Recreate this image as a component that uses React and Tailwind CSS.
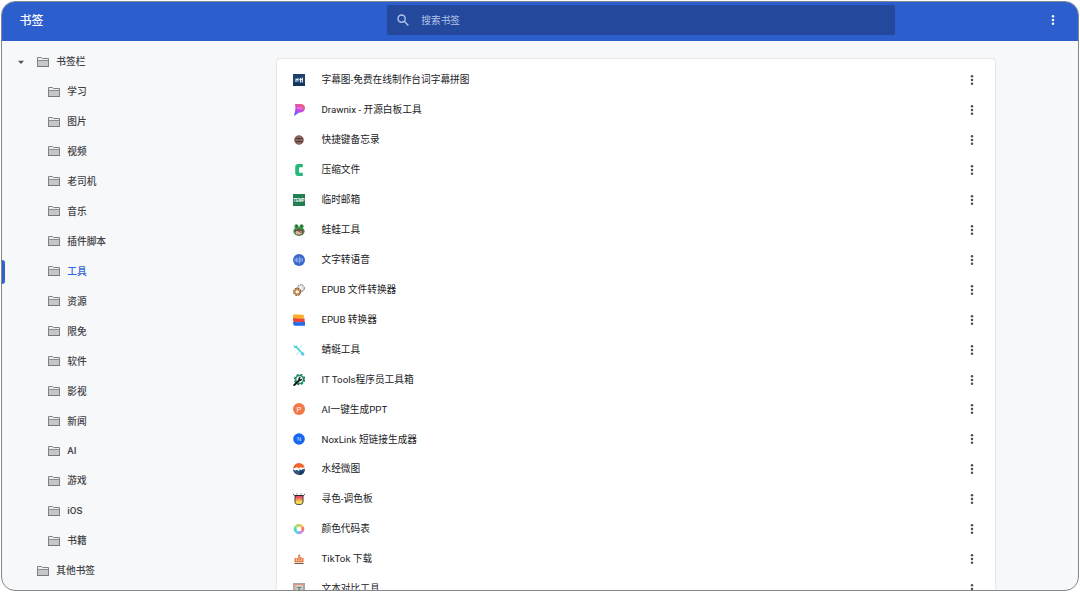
import React from "react";

const folders = ["学习", "图片", "视频", "老司机", "音乐", "插件脚本", "工具", "资源", "限免", "软件", "影视", "新闻", "AI", "游戏", "iOS", "书籍"];

const letter = { fontFamily: '"Liberation Sans", sans-serif', fontWeight: 700, textAnchor: "middle" };

const icons = {
  subtitle: (
    <>
      <rect width="12" height="12" fill="#1d426f" />
      <path d="M0 9h12v3H0z" fill="#15345c" />
      <path d="M3 4.500v3.500M2.500 5.500h2.500M5 4v3.500M7.500 4v4.500M6.300 5.500h3.700M9.300 3.500v5" stroke="#e3ebf3" strokeWidth="1.100" fill="none" />
    </>
  ),
  drawnix: (
    <>
      <defs>
        <linearGradient id="dx" x1=".7" y1="0" x2=".2" y2="1">
          <stop offset="0" stopColor="#fb5a73" />
          <stop offset=".5" stopColor="#c64be8" />
          <stop offset="1" stopColor="#5260ff" />
        </linearGradient>
      </defs>
      <path d="M2 0H7.800C10.400 0 12 1.700 12 4c0 2.700-1.900 4.400-4.700 4.600C5.300 8.800 4.600 9.800 1 12c.3-2.500 1.200-4.400 1.400-7.500C2.500 2.800 2.300 1.700 2 0z" fill="url(#dx)" />
      <path d="M4 4.200c.8-.7 1.400-.7 2 0s1.200.6 1.700 0 1.200-.3 1.800.4" stroke="#ffc3e8" strokeWidth=".8" fill="none" />
    </>
  ),
  keys: (
    <>
      <circle cx="6" cy="6" r="4.500" fill="#80504d" stroke="#a8655e" strokeWidth=".6" />
      <path d="M2.500 4.500h7M2.500 7.600h7" stroke="#3c3c40" strokeWidth=".9" />
      <path d="M3.200 6h5.600M4.200 3.300h3.600M4.500 8.900h3" stroke="#c9aaa3" strokeWidth=".7" />
      <path d="M6 3v6" stroke="#4a3c3c" strokeWidth=".7" />
    </>
  ),
  zip: <path d="M9.800 0v3.200H7.100c-.7 0-1.100.4-1.100 1.100v3.400c0 .7.400 1.100 1.100 1.100h2.700V12H5.300C3.300 12 2.200 10.900 2.200 9V3C2.200 1.100 3.300 0 5.300 0z" fill="#27b77b" />,
  temp: (
    <>
      <rect width="12" height="12" fill="#257e53" />
      <text x="6" y="7.900" fontSize="5" textLength="10.800" lengthAdjust="spacingAndGlyphs" fill="#fff" style={letter}>TEMP</text>
    </>
  ),
  frog: (
    <>
      <ellipse cx="6" cy="7.300" rx="5.600" ry="4.600" fill="#3b9149" />
      <circle cx="3.400" cy="2.300" r="2" fill="#3b9149" />
      <circle cx="8.600" cy="2.300" r="2" fill="#3b9149" />
      <circle cx="3.400" cy="2.300" r=".7" fill="#173d27" />
      <circle cx="8.600" cy="2.300" r=".7" fill="#173d27" />
      <path d="M1.600 6.400 6 5l4.500 1.500-1 3.500c-2 1.700-5 1.700-6.600 0z" fill="#713f36" />
      <ellipse cx="5.800" cy="8.600" rx="3.300" ry="2.200" fill="#dfb4a3" />
      <path d="M4.500 6.500 8.500 8.700" stroke="#3e2926" strokeWidth=".8" />
    </>
  ),
  speech: (
    <>
      <circle cx="6" cy="6" r="6" fill="#3867c8" />
      <path d="M2 5v2M3.400 4v3.800M4.900 4.800v3M6.400 3v6M7.900 4v3.800M9.400 4.800v2.400" stroke="#adcaff" strokeWidth=".75" strokeLinecap="round" />
    </>
  ),
  gears: (
    <>
      <circle cx="7.800" cy="4.200" r="3.600" fill="#f7f5f2" stroke="#77716d" strokeWidth="1" strokeDasharray="1.700 .9" />
      <circle cx="7.800" cy="4.200" r="2.700" fill="none" stroke="#aaa5a1" strokeWidth=".6" />
      <circle cx="4.200" cy="7.800" r="3.500" fill="none" stroke="#72462a" strokeWidth="1.300" strokeDasharray="1.800 .95" />
      <circle cx="4.200" cy="7.800" r="2.500" fill="#fff" stroke="#c88a4c" strokeWidth="1.700" />
    </>
  ),
  epub: (
    <>
      <path d="M1.500.3 11 1l-.5 3.300 1 .5v3H1.200L0 6V1.500z" fill="#f8ae28" />
      <path d="M.2 4.100c3 .6 6 1.100 11.300.5v3.600H1.500C.3 7.700-.1 5.500.2 4.100z" fill="#eb4240" />
      <path d="M.2 7.800c3.500.7 7.300.5 11.800 0v4H1.500C.2 11.400-.1 9.200.2 7.800z" fill="#246de4" />
    </>
  ),
  dragonfly: (
    <>
      <path d="m2.500 2.200 6.800 7.300" stroke="#42d0d6" strokeWidth="1.700" />
      <path d="m5.500 5.300 3.300-3.800M6.300 7.300 2.800 11" stroke="#a5e6e8" strokeWidth="1" />
      <path d="m1.200 1.100.3 2.300 1.900.1.300-1.800" stroke="#32d7c6" strokeWidth="1" fill="none" />
      <path d="m8 7.800 2.800.7.700 2.300-1.300 1-2.400-.9z" fill="#60caef" />
    </>
  ),
  ittools: (
    <>
      <circle cx="6.600" cy="5.500" r="4.900" fill="none" stroke="#168259" strokeWidth="1.600" strokeDasharray="2.300 1.548" />
      <circle cx="6.600" cy="5.500" r="3.900" fill="#fff" stroke="#168259" strokeWidth="1.400" />
      <path d="M1.300 11 6 6.600" stroke="#111d1a" strokeWidth="2" strokeLinecap="round" />
      <path d="M9.200 4.300 8 5.400 6.900 4.300 8 3.200C6.300 2.700 4.900 4.200 5.300 5.700L6.500 7c1.700.4 3.100-1.100 2.700-2.700z" fill="#111d1a" />
    </>
  ),
  ppt: (
    <>
      <circle cx="6" cy="6" r="6" fill="#f27749" />
      <text x="6" y="8.700" fontSize="7.500" fill="#fff" style={{ ...letter, fontWeight: 400 }}>P</text>
    </>
  ),
  nox: (
    <>
      <circle cx="6" cy="6" r="5.800" fill="#1766ee" />
      <text x="6" y="8" fontSize="5.700" fill="#dceaff" style={{ ...letter, fontWeight: 400 }}>N</text>
    </>
  ),
  water: (
    <>
      <circle cx="6" cy="6" r="6" fill="#f2652d" />
      <path d="M0 5.500 2.600 7l3-.4 2 .3L12 4.900C12.600 13.600.2 14 0 5.500z" fill="#24598c" />
      <path d="M.1 5.200 2.400 5 4 4l1.800 1.500 1.700-1.400 1.500.8 2.800-.8.1 1.600-2.200.3-1.200 1-1.500-.7L5.700 8 4 6.800 2.400 7.500.2 6.600z" fill="#fff" />
      <path d="m7 8.700 2.100-1.200 2.200 1.200C10 11.500 8.100 12 6 12z" fill="#173a61" />
    </>
  ),
  palette: (
    <>
      <defs>
        <linearGradient id="cup" x1="0" y1="0" x2="0" y2="1">
          <stop offset=".15" stopColor="#e84a6b" />
          <stop offset=".5" stopColor="#f7a04d" />
          <stop offset=".8" stopColor="#ffe94f" />
        </linearGradient>
      </defs>
      <path d="M2 2.500h8v6.200c0 1.700-1.100 2.700-2.700 2.700H4.700C3.100 11.400 2 10.400 2 8.700z" fill="url(#cup)" stroke="#22262b" strokeWidth=".9" />
      <path d="M.3.800C.5 2.200 1.200 2.500 2 2.500h8c.8 0 1.500-.3 1.700-1.700M3.500.9h1M7.500.9h1" fill="none" stroke="#22262b" strokeWidth=".8" />
    </>
  ),
  wheel: (
    <g fill="none" strokeWidth="2.900">
      <path d="M6 2.200A3.800 3.800 0 0 1 9.300 4.100" stroke="#f6c157" />
      <path d="M9.300 4.100A3.800 3.800 0 0 1 9.300 7.900" stroke="#f47a67" />
      <path d="M9.300 7.900A3.800 3.800 0 0 1 6 9.800" stroke="#c889ef" />
      <path d="M6 9.800A3.800 3.800 0 0 1 2.700 7.900" stroke="#5bc8ef" />
      <path d="M2.700 7.900A3.800 3.800 0 0 1 2.700 4.100" stroke="#5bd5a9" />
      <path d="M2.700 4.100A3.800 3.800 0 0 1 6 2.200" stroke="#a8df66" />
    </g>
  ),
  tiktok: (
    <>
      <path d="M2.200 5v3.500h7.600V5M4.300 7.500V5M6 7.500V2.200M7.800 7.500V4" fill="none" stroke="#ed7a3d" strokeWidth="1.500" />
      <path d="m6.300 1 1.400 2.200H4.900z" fill="#ed7a3d" />
      <path d="M1.500 10.500h9" stroke="#6e5750" strokeWidth="1.100" />
    </>
  ),
  compare: (
    <>
      <rect width="12" height="12" fill="#9fa9ab" />
      <path d="M.7.700h10.600V3H.7z" fill="#d49593" />
      <path d="M.7 2h2v10h-2z" fill="#dda4a0" />
      <path d="M2.500 2h7.500v10H2.500z" fill="#d7cbaa" />
      <text x="6" y="8.700" fontSize="8" fill="#4379bd" style={letter}>T</text>
    </>
  ),
};

const bookmarks = [
  ["subtitle", "字幕图-免费在线制作台词字幕拼图"],
  ["drawnix", "Drawnix - 开源白板工具"],
  ["keys", "快捷键备忘录"],
  ["zip", "压缩文件"],
  ["temp", "临时邮箱"],
  ["frog", "蛙蛙工具"],
  ["speech", "文字转语音"],
  ["gears", "EPUB 文件转换器"],
  ["epub", "EPUB 转换器"],
  ["dragonfly", "蜻蜓工具"],
  ["ittools", "IT Tools程序员工具箱"],
  ["ppt", "AI一键生成PPT"],
  ["nox", "NoxLink 短链接生成器"],
  ["water", "水经微图"],
  ["palette", "寻色-调色板"],
  ["wheel", "颜色代码表"],
  ["tiktok", "TikTok 下载"],
  ["compare", "文本对比工具"],
];

function Dots({ className }) {
  return (
    <svg viewBox="0 0 4 12" className={`h-3 w-1 shrink-0 ${className}`} fill="currentColor">
      <circle cx="2" cy="2.200" r="1.250" />
      <circle cx="2" cy="6" r="1.250" />
      <circle cx="2" cy="9.800" r="1.250" />
    </svg>
  );
}

function Folder() {
  return (
    <svg viewBox="0 0 12 10" className="mb-px h-[10px] w-[12px] shrink-0" fill="none">
      <path d="M.5 9.500v-9h4l1 1h6v8z" fill="#eceded" stroke="#808284" />
      <path d="M1 4h10v5H1z" fill="#c6c7c8" />
      <path d="M1 3.500h10" stroke="#8b8d8f" />
      <path d="M0 9.500h12" stroke="#77797b" />
    </svg>
  );
}

function TreeRow({ name, nested, open, selected }) {
  return (
    <div className={`flex h-[29.940px] items-center ${nested ? "pl-[46px]" : "pl-[15px]"} ${selected ? "relative text-[#2f68d8]" : "text-[#3f4245]"}`}>
      {selected && <span className="absolute top-[3px] left-0 h-6 w-[3px] rounded-r-sm bg-[#2f62cd]" />}
      {!nested && (
        <svg viewBox="0 0 8 5" className="mr-[12px] h-[5px] w-2" fill="#505356">
          {open && <path d="M1 .8h6L4 4z" />}
        </svg>
      )}
      <Folder />
      <span className="ml-[7.300px] text-[9.700px] leading-none font-medium whitespace-nowrap">{name}</span>
    </div>
  );
}

export default function App() {
  return (
    <div className="h-[592px] w-[1080px] overflow-hidden bg-white p-px font-[Roboto,'Noto_Sans_CJK_SC',sans-serif]">
      <div className="flex h-[590px] w-[1078px] flex-col overflow-hidden rounded-[14px] border border-[#85888b] bg-[#f7f8fa]">
        <header className="flex h-[39px] shrink-0 items-center bg-[#2d5ecd] pb-[3px] text-white">
          <h1 className="w-[385px] pt-[2px] pl-[17.500px] text-[12px] leading-none font-medium">书签</h1>
          <div className="flex h-[30px] w-[508px] items-center rounded-[1px] bg-[#24489b] pl-[10px] text-[#b4c4e9]">
            <svg viewBox="0 0 12 12" className="h-3 w-3" fill="none" stroke="currentColor" strokeWidth="1.400">
              <circle cx="4.600" cy="4.600" r="3.600" />
              <path d="m7.200 7.200 4.200 4.200" />
            </svg>
            <span className="ml-[12.300px] pt-px text-[9.700px] leading-none">搜索书签</span>
          </div>
          <Dots className="ml-[156px]" />
        </header>
        <div className="flex min-h-0 flex-1">
          <nav className="w-[275px] shrink-0 pt-[6.200px]">
            <TreeRow name="书签栏" open />
            {folders.map((name) => (
              <TreeRow key={name} name={name} nested selected={name === "工具"} />
            ))}
            <TreeRow name="其他书签" />
          </nav>
          <main className="mt-[18px] w-[718px] shrink-0 rounded-t-[3px] bg-white pt-[6.200px] shadow-[0_0_2px_rgba(60,64,67,0.3)]">
            {bookmarks.map(([icon, title]) => (
              <div key={icon} className="flex h-[29.940px] items-center pr-[21px] pl-[16px]">
                <svg viewBox="0 0 12 12" className="h-3 w-3 shrink-0">{icons[icon]}</svg>
                <span className="ml-[16.500px] flex-1 text-[9.700px] leading-none whitespace-nowrap text-[#202124]">{title}</span>
                <Dots className="text-[#4d5053]" />
              </div>
            ))}
          </main>
        </div>
      </div>
    </div>
  );
}
